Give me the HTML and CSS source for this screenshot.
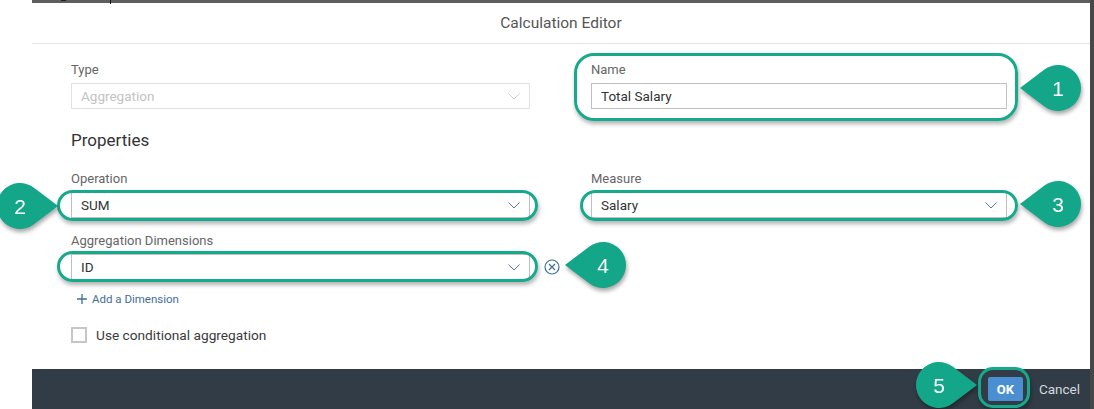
FILE: index.html
```html
<!DOCTYPE html>
<html lang="en">
<head>
<meta charset="utf-8">
<title>Calculation Editor</title>
<link rel="stylesheet" href="styles.css">
</head>
<body>
<div class="page">
  <div class="gutter"></div>
  <div class="dialog">
    <div class="topstrip"><span class="caret"></span><span class="vline"></span></div>
    <header class="title">Calculation Editor</header>
    <main class="content">
      <div class="grid">
        <div class="field">
          <div class="label">Type</div>
          <div class="input disabled">Aggregation
            <svg class="chevron" viewBox="0 0 12 7"><path d="M0.5 0.5 L6 6 L11.5 0.5" fill="none" stroke="#cfcfcf" stroke-width="1"/></svg>
          </div>
        </div>
        <div class="field">
          <div class="label">Name</div>
          <div class="input">Total Salary</div>
        </div>
      </div>
      <h2 class="heading">Properties</h2>
      <div class="grid">
        <div class="field">
          <div class="label">Operation</div>
          <div class="input select">SUM
            <svg class="chevron" viewBox="0 0 12 7"><path d="M0.5 0.5 L6 6 L11.5 0.5" fill="none" stroke="#5d7794" stroke-width="1"/></svg>
          </div>
        </div>
        <div class="field">
          <div class="label">Measure</div>
          <div class="input select">Salary
            <svg class="chevron" viewBox="0 0 12 7"><path d="M0.5 0.5 L6 6 L11.5 0.5" fill="none" stroke="#5d7794" stroke-width="1"/></svg>
          </div>
        </div>
      </div>
      <div class="field agg">
        <div class="label">Aggregation Dimensions</div>
        <div class="dim-row">
          <div class="input select dim">ID
            <svg class="chevron" viewBox="0 0 12 7"><path d="M0.5 0.5 L6 6 L11.5 0.5" fill="none" stroke="#5d7794" stroke-width="1"/></svg>
          </div>
          <svg class="remove" viewBox="0 0 16 16"><circle cx="8" cy="8" r="7" fill="none" stroke="#3f6d9c" stroke-width="1.2"/><path d="M5 5 L11 11 M11 5 L5 11" stroke="#3f6d9c" stroke-width="1.2"/></svg>
        </div>
      </div>
      <div class="add"><svg class="plus" viewBox="0 0 10 10"><path d="M5 0 V10 M0 5 H10" stroke="#3f6d9c" stroke-width="1.3"/></svg>Add a Dimension</div>
      <div class="check"><span class="box"></span>Use conditional aggregation</div>
    </main>
    <footer class="footer">
      <div class="ok">OK</div>
      <div class="cancel">Cancel</div>
    </footer>
  </div>
  <div class="edge"></div>
</div>

<div class="ring ring-name"></div>
<div class="ring ring-op"></div>
<div class="ring ring-measure"></div>
<div class="ring ring-dim"></div>
<div class="ring ring-ok"></div>

<svg class="callout c1" viewBox="0 0 64 52"><path d="M0,25 L24.1,6.7 A23,23 0 1,1 24.1,43.3 Z" fill="#14a689"/><text x="38" y="32.5" text-anchor="middle">1</text></svg>
<svg class="callout c3" viewBox="0 0 64 52"><path d="M0,25 L24.1,6.7 A23,23 0 1,1 24.1,43.3 Z" fill="#14a689"/><text x="38" y="32.5" text-anchor="middle">3</text></svg>
<svg class="callout c4" viewBox="0 0 64 52"><path d="M0,25 L24.1,6.7 A23,23 0 1,1 24.1,43.3 Z" fill="#14a689"/><text x="38" y="32.5" text-anchor="middle">4</text></svg>
<svg class="callout c2" viewBox="0 0 64 52"><path d="M64,25 L39.9,6.7 A23,23 0 1,0 39.9,43.3 Z" fill="#14a689"/><text x="26" y="32.5" text-anchor="middle">2</text></svg>
<svg class="callout c5" viewBox="0 0 64 52"><path d="M64,25 L39.9,6.7 A23,23 0 1,0 39.9,43.3 Z" fill="#14a689"/><text x="26" y="32.5" text-anchor="middle">5</text></svg>
</body>
</html>
```

FILE: styles.css
```css
html, body {
  margin: 0;
  padding: 0;
  background: #ffffff;
}
body {
  position: relative;
  width: 1094px;
  height: 409px;
  overflow: hidden;
  font-family: Roboto, "Noto Sans", sans-serif;
}
.page {
  display: flex;
  height: 409px;
}
.gutter {
  width: 32px;
  flex: none;
}
.dialog {
  width: 1058px;
  flex: none;
  display: flex;
  flex-direction: column;
  background: #fff;
}
.edge {
  width: 4px;
  flex: none;
  background: #474747;
}
.topstrip {
  height: 3px;
  background: #5e5e5e;
  position: relative;
}
.vline {
  position: absolute;
  left: 78px;
  top: 0;
  width: 1px;
  height: 4px;
  background: #111;
}
.caret {
  position: absolute;
  left: 29px;
  top: 0;
  width: 5px;
  height: 2px;
  border-top: 1px solid #222;
}
.title {
  height: 40px;
  line-height: 40px;
  text-align: center;
  font-size: 15.5px;
  color: #555;
  border-bottom: 1px solid #e6e6e6;
}
.content {
  padding: 18px 0 0 39px;
}
.grid {
  display: grid;
  grid-template-columns: 459px 416px;
  column-gap: 61px;
}
.label {
  font-size: 13px;
  line-height: 16px;
  color: #666;
  margin-bottom: 5px;
}
.input {
  height: 26px;
  box-sizing: border-box;
  border: 1px solid #bfbfbf;
  display: flex;
  align-items: center;
  padding: 0 9px 0 9px;
  font-size: 13.5px;
  color: #333;
}
.input.disabled {
  border-color: #e2e2e2;
  color: #c2c2c2;
}
.chevron {
  margin-left: auto;
  width: 12px;
  height: 7px;
}
.heading {
  margin: 20px 0 20px;
  font-size: 17px;
  line-height: 22px;
  font-weight: normal;
  color: #333;
}
.agg {
  margin-top: 15px;
}
.dim-row {
  display: flex;
  align-items: center;
  gap: 14px;
}
.dim {
  width: 459px;
}
.remove {
  width: 16px;
  height: 16px;
}
.add {
  margin: 12px 0 0 6px;
  display: flex;
  align-items: center;
  gap: 5px;
  font-size: 11.5px;
  line-height: 14px;
  color: #3f6d9c;
}
.plus {
  width: 10px;
  height: 10px;
}
.check {
  margin-top: 21px;
  display: flex;
  align-items: center;
  gap: 9px;
  font-size: 13.7px;
  line-height: 16px;
  color: #3a3a3a;
}
.box {
  width: 16px;
  height: 16px;
  box-sizing: border-box;
  border: 2px solid #c6c6c6;
}
.footer {
  margin-top: auto;
  height: 40px;
  background: #323c47;
  display: flex;
  align-items: center;
  justify-content: flex-end;
  padding-right: 10px;
  gap: 16px;
}
.ok {
  width: 35px;
  height: 24px;
  border-radius: 2px;
  background: #4b8fd3;
  color: #fff;
  font-size: 13px;
  font-weight: bold;
  display: flex;
  align-items: center;
  justify-content: center;
}
.cancel {
  color: #d3d8de;
  font-size: 13.5px;
}

/* annotation overlays */
.ring {
  position: absolute;
  box-sizing: border-box;
  border: 3px solid #16a98b;
  box-shadow: 1px 3px 4px rgba(0, 0, 0, 0.3);
}
.ring-name { left: 574px; top: 53px; width: 444px; height: 68px; border-radius: 20px; }
.ring-op { left: 57px; top: 190px; width: 481px; height: 31px; border-radius: 16px; }
.ring-measure { left: 580px; top: 190px; width: 438px; height: 31px; border-radius: 16px; }
.ring-dim { left: 57px; top: 251px; width: 481px; height: 31px; border-radius: 16px; }
.ring-ok { left: 978px; top: 367px; width: 52px; height: 41px; border-radius: 15px; }

.callout {
  position: absolute;
  width: 64px;
  height: 52px;
  overflow: visible;
  filter: drop-shadow(1px 3px 2px rgba(0, 0, 0, 0.35));
}
.callout text {
  fill: #fff;
  font-family: "Liberation Sans", Arial, sans-serif;
  font-size: 21px;
}
.c1 { left: 1020px; top: 63px; }
.c3 { left: 1020px; top: 179px; }
.c4 { left: 565px; top: 240px; }
.c2 { left: -6px; top: 181px; }
.c5 { left: 913px; top: 360px; }
```
